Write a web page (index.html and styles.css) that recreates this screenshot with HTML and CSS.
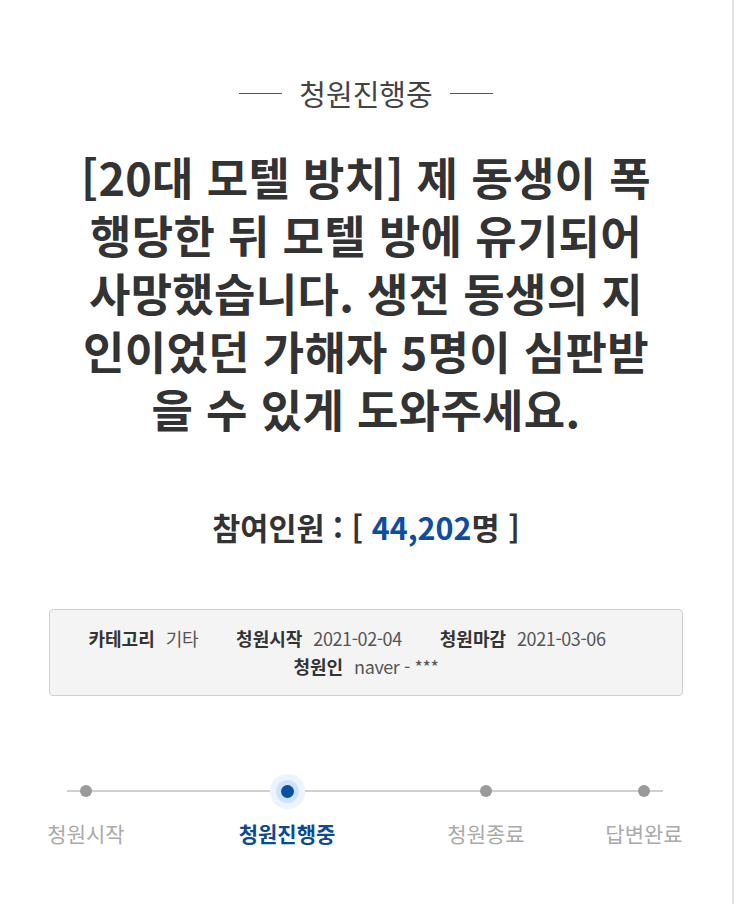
FILE: index.html
```html
<!DOCTYPE html>
<html lang="ko">
<head>
<meta charset="utf-8">
<title>청원진행중</title>
<link rel="stylesheet" href="styles.css">
</head>
<body>
<div class="page">
  <div class="status-head">
    <span class="dash"></span>
    <span class="status-text">청원진행중</span>
    <span class="dash"></span>
  </div>
  <h1 class="title">
    <span class="title-line">[20대 모텔 방치] 제 동생이 폭</span>
    <span class="title-line">행당한 뒤 모텔 방에 유기되어</span>
    <span class="title-line">사망했습니다. 생전 동생의 지</span>
    <span class="title-line">인이었던 가해자 5명이 심판받</span>
    <span class="title-line">을 수 있게 도와주세요.</span>
  </h1>
  <div class="count">참여인원 : [ <span class="count-num">44,202</span>명 ]</div>
  <div class="info">
    <div class="info-row">
      <div class="item spaced"><span class="label">카테고리</span><span class="value">기타</span></div>
      <div class="item spaced"><span class="label">청원시작</span><span class="value">2021-02-04</span></div>
      <div class="item spaced"><span class="label">청원마감</span><span class="value">2021-03-06</span></div>
    </div>
    <div class="info-row">
      <div class="item"><span class="label">청원인</span><span class="value">naver - ***</span></div>
    </div>
  </div>
  <div class="steps">
    <div class="step s1"><span class="dot"></span><span class="step-label">청원시작</span></div>
    <div class="step s2 active"><span class="dot"></span><span class="step-label">청원진행중</span></div>
    <div class="step s3"><span class="dot"></span><span class="step-label">청원종료</span></div>
    <div class="step s4"><span class="dot"></span><span class="step-label">답변완료</span></div>
  </div>
</div>
</body>
</html>
```

FILE: styles.css
```css
html, body {
  margin: 0;
  padding: 0;
  background: #ffffff;
}
body {
  font-family: "Noto Sans CJK KR", "Noto Sans", sans-serif;
  color: #333;
}
.page {
  width: 734px;
  min-height: 904px;
  border-right: 2px solid #e2e2e2;
  box-sizing: border-box;
  padding-top: 75px;
}
.status-head {
  display: flex;
  justify-content: center;
  align-items: center;
  gap: 17px;
  height: 36px;
}
.dash {
  width: 43px;
  height: 1px;
  background: #555;
}
.status-text {
  font-size: 29px;
  line-height: 36px;
  color: #444;
  font-weight: 400;
}
.title {
  margin: 37px 0 0;
  display: flex;
  flex-direction: column;
  align-items: center;
  font-size: 45px;
  font-weight: 700;
  color: #333;
  letter-spacing: 0.3px;
}
.title-line {
  display: block;
  height: 58px;
  line-height: 58px;
  white-space: nowrap;
}
.count {
  margin-top: 69px;
  text-align: center;
  font-size: 30.5px;
  line-height: 40px;
  font-weight: 700;
  color: #333;
}
.count-num {
  color: #0d4da1;
}
.info {
  width: 634px;
  margin: 62px auto 0;
  box-sizing: border-box;
  border: 1px solid #cfcfcf;
  border-radius: 4px;
  background: #f4f4f4;
  padding: 14px 0 15px;
}
.info-row {
  display: flex;
  justify-content: center;
  line-height: 28px;
  font-size: 18px;
}
.item {
  display: flex;
  gap: 11px;
}
.item.spaced {
  margin-right: 38px;
}
.label {
  font-weight: 700;
  color: #333;
}
.value {
  color: #555;
  letter-spacing: -0.4px;
}
.steps {
  position: relative;
  display: flex;
  margin-top: 83px;
}
.steps::before {
  content: "";
  position: absolute;
  left: 67px;
  width: 596px;
  top: 11px;
  height: 2px;
  background: #d0d0d0;
}
.step {
  position: relative;
  width: 120px;
  display: flex;
  flex-direction: column;
  align-items: center;
}
.s1 { margin-left: 26px; }
.s2 { margin-left: 81px; }
.s3 { margin-left: 79px; }
.s4 { margin-left: 38px; }
.dot {
  width: 12px;
  height: 12px;
  margin: 6px 0;
  border-radius: 50%;
  background: #9a9a9a;
}
.active .dot {
  width: 13px;
  height: 13px;
  margin: 5.5px 0;
  background: #0b4ea2;
  box-shadow: 0 0 0 5px #cfe4fc, 0 0 0 11px #ecf4fe;
}
.step-label {
  margin-top: 16px;
  font-size: 21px;
  line-height: 28px;
  color: #aaa;
  white-space: nowrap;
}
.active .step-label {
  color: #0e4a92;
  font-weight: 700;
}
```
